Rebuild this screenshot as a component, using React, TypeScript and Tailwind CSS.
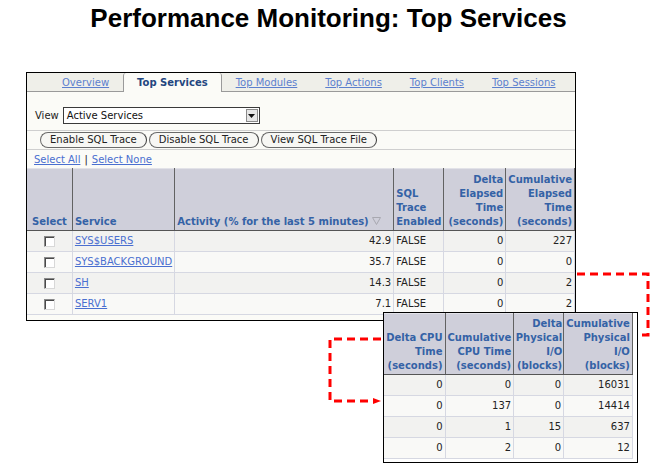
import React from 'react';

const tabs = ['Overview', 'Top Services', 'Top Modules', 'Top Actions', 'Top Clients', 'Top Sessions'];

const services = [
  { name: 'SYS$USERS', activity: '42.9', trace: 'FALSE', delta: '0', cum: '227' },
  { name: 'SYS$BACKGROUND', activity: '35.7', trace: 'FALSE', delta: '0', cum: '0' },
  { name: 'SH', activity: '14.3', trace: 'FALSE', delta: '0', cum: '2' },
  { name: 'SERV1', activity: '7.1', trace: 'FALSE', delta: '0', cum: '2' },
];

const cpuRows = [
  ['0', '0', '0', '16031'],
  ['0', '137', '0', '14414'],
  ['0', '1', '15', '637'],
  ['0', '2', '0', '12'],
];

const th =
  'align-bottom bg-[#cfcfda] border-r border-b border-r-[#626262] border-b-[#555] border-t border-t-[#e2e2e8] px-[2px] pb-[1px] font-bold text-[#3462a6] leading-[14px]';
const td = 'h-[20px] border-r border-b border-[#d6d8e2] px-[2px] text-[#222] leading-[20px] whitespace-nowrap';

function Checkbox() {
  return (
    <span className="inline-block h-[11px] w-[11px] border border-[#8a8a8a] border-r-[#d8d8d8] border-b-[#d8d8d8] bg-white shadow-[inset_1px_1px_0_#4a4a4a] align-middle" />
  );
}

function Button({ label }: { label: string }) {
  return (
    <div className="flex h-[16px] items-center rounded-[8px] border border-[#6a6a6a] border-r-[#3a3a3a] bg-[#f7f7f4] px-[9px] text-[10px] text-[#222] leading-none">
      {label}
    </div>
  );
}

export default function App() {
  return (
    <div className="relative h-[464px] w-[657px] overflow-hidden bg-white font-['DejaVu_Sans',sans-serif] text-[10px]">
      <h1 className="mt-[3px] text-center font-['Liberation_Sans',Arial,sans-serif] text-[26px] font-bold leading-[30px] text-black">
        Performance Monitoring: Top Services
      </h1>

      {/* main page frame */}
      <div className="ml-[26px] mt-[39px] h-[249px] w-[550px] border border-black bg-[#fbfbf7]">
        <div className="flex h-[19px] border-b border-[#9a9a9a] bg-[#efefe9] pl-[21px]">
          {tabs.map((t) =>
            t === 'Top Services' ? (
              <div
                key={t}
                className="-mb-px flex h-[19px] items-center rounded-t-[3px] border-x border-[#9a9a9a] bg-[#fbfbf7] px-[13px] font-bold text-[#23467f]"
              >
                {t}
              </div>
            ) : (
              <div key={t} className="flex h-[18px] items-center px-[14px] text-[#5c7fce] underline">
                {t}
              </div>
            )
          )}
        </div>

        <div className="flex h-[17px] items-center gap-[4px] pl-[8px] mt-[15px]">
          <span className="text-[#222]">View</span>
          <div className="flex h-[17px] w-[197px] items-center justify-between border border-[#3a3a3a] bg-white pl-[3px] pr-[1px]">
            <span className="text-[#111]">Active Services</span>
            <span className="flex h-[13px] w-[12px] items-center justify-center border border-[#8a8a8a] bg-[#e6e6e6]">
              <svg width="7" height="4" viewBox="0 0 7 4">
                <path d="M0 0H7L3.5 4Z" fill="#111" />
              </svg>
            </span>
          </div>
        </div>

        <div className="mt-[6px] flex h-[20px] items-center gap-[2px] border-y border-[#cfcfcf] pl-[13px]">
          <Button label="Enable SQL Trace" />
          <Button label="Disable SQL Trace" />
          <Button label="View SQL Trace File" />
        </div>

        <div className="flex h-[18px] items-center gap-[4px] pl-[7px] pt-[1px]">
          <span className="text-[#4a6fd0] underline">Select All</span>
          <span className="text-[#222]">|</span>
          <span className="text-[#4a6fd0] underline">Select None</span>
        </div>

        <table className="table-fixed border-collapse">
          <colgroup>
            <col className="w-[46px]" />
            <col className="w-[100px]" />
            <col className="w-[220px]" />
            <col className="w-[50px]" />
            <col className="w-[62px]" />
            <col className="w-[68px]" />
          </colgroup>
          <thead>
            <tr className="h-[62px]">
              <th className={`${th} text-center`}>Select</th>
              <th className={`${th} text-left`}>Service</th>
              <th className={`${th} text-left whitespace-nowrap`}>
                Activity (% for the last 5 minutes){' '}
                <svg width="9" height="8" viewBox="0 0 9 8" className="inline-block align-baseline">
                  <path d="M0.5 0.5H8.5L4.5 7.5Z" fill="none" stroke="#a8a8b0" />
                </svg>
              </th>
              <th className={`${th} text-left`}>
                SQL
                <br />
                Trace
                <br />
                Enabled
              </th>
              <th className={`${th} text-right`}>
                Delta
                <br />
                Elapsed
                <br />
                Time
                <br />
                (seconds)
              </th>
              <th className={`${th} text-right`}>
                Cumulative
                <br />
                Elapsed
                <br />
                Time
                <br />
                (seconds)
              </th>
            </tr>
          </thead>
          <tbody>
            {services.map((s, i) => (
              <tr key={s.name} className={i % 2 === 0 ? 'bg-[#f2f2f0]' : 'bg-[#f9f9f7]'}>
                <td className={`${td} text-center`}>
                  <Checkbox />
                </td>
                <td className={td}>
                  <span className="text-[#4a6fd0] underline">{s.name}</span>
                </td>
                <td className={`${td} text-right`}>{s.activity}</td>
                <td className={td}>{s.trace}</td>
                <td className={`${td} text-right`}>{s.delta}</td>
                <td className={`${td} text-right`}>{s.cum}</td>
              </tr>
            ))}
          </tbody>
        </table>
      </div>

      {/* zoomed-in part of the wide table */}
      <div className="absolute left-[383px] top-[312px] h-[151px] w-[255px] border border-black bg-white">
        <table className="table-fixed border-collapse">
          <colgroup>
            <col className="w-[61px]" />
            <col className="w-[68px]" />
            <col className="w-[50px]" />
            <col className="w-[67px]" />
          </colgroup>
          <thead>
            <tr className="h-[61px]">
              <th className={`${th} text-right whitespace-nowrap`}>
                Delta CPU
                <br />
                Time
                <br />
                (seconds)
              </th>
              <th className={`${th} text-right whitespace-nowrap`}>
                Cumulative
                <br />
                CPU Time
                <br />
                (seconds)
              </th>
              <th className={`${th} text-right !px-[1px]`}>
                Delta
                <br />
                Physical
                <br />
                I/O
                <br />
                (blocks)
              </th>
              <th className={`${th} text-right`}>
                Cumulative
                <br />
                Physical
                <br />
                I/O
                <br />
                (blocks)
              </th>
            </tr>
          </thead>
          <tbody>
            {cpuRows.map((r, i) => (
              <tr key={i} className={i % 2 === 0 ? 'bg-[#f2f2f0]' : 'bg-[#f9f9f7]'}>
                {r.map((v, j) => (
                  <td key={j} className={`${td} text-right`}>
                    {v}
                  </td>
                ))}
              </tr>
            ))}
          </tbody>
        </table>
      </div>

      {/* red dashed callout connectors */}
      <svg className="pointer-events-none absolute inset-0" width="657" height="464">
        <path d="M577 274H648V335H639" fill="none" stroke="#ff0000" strokeWidth="3" strokeDasharray="8 5" />
        <path d="M381 339H330V401H374" fill="none" stroke="#ff0000" strokeWidth="3" strokeDasharray="8 5" />
        <path d="M373 398L381 401L373 404Z" fill="#ff0000" />
      </svg>
    </div>
  );
}
